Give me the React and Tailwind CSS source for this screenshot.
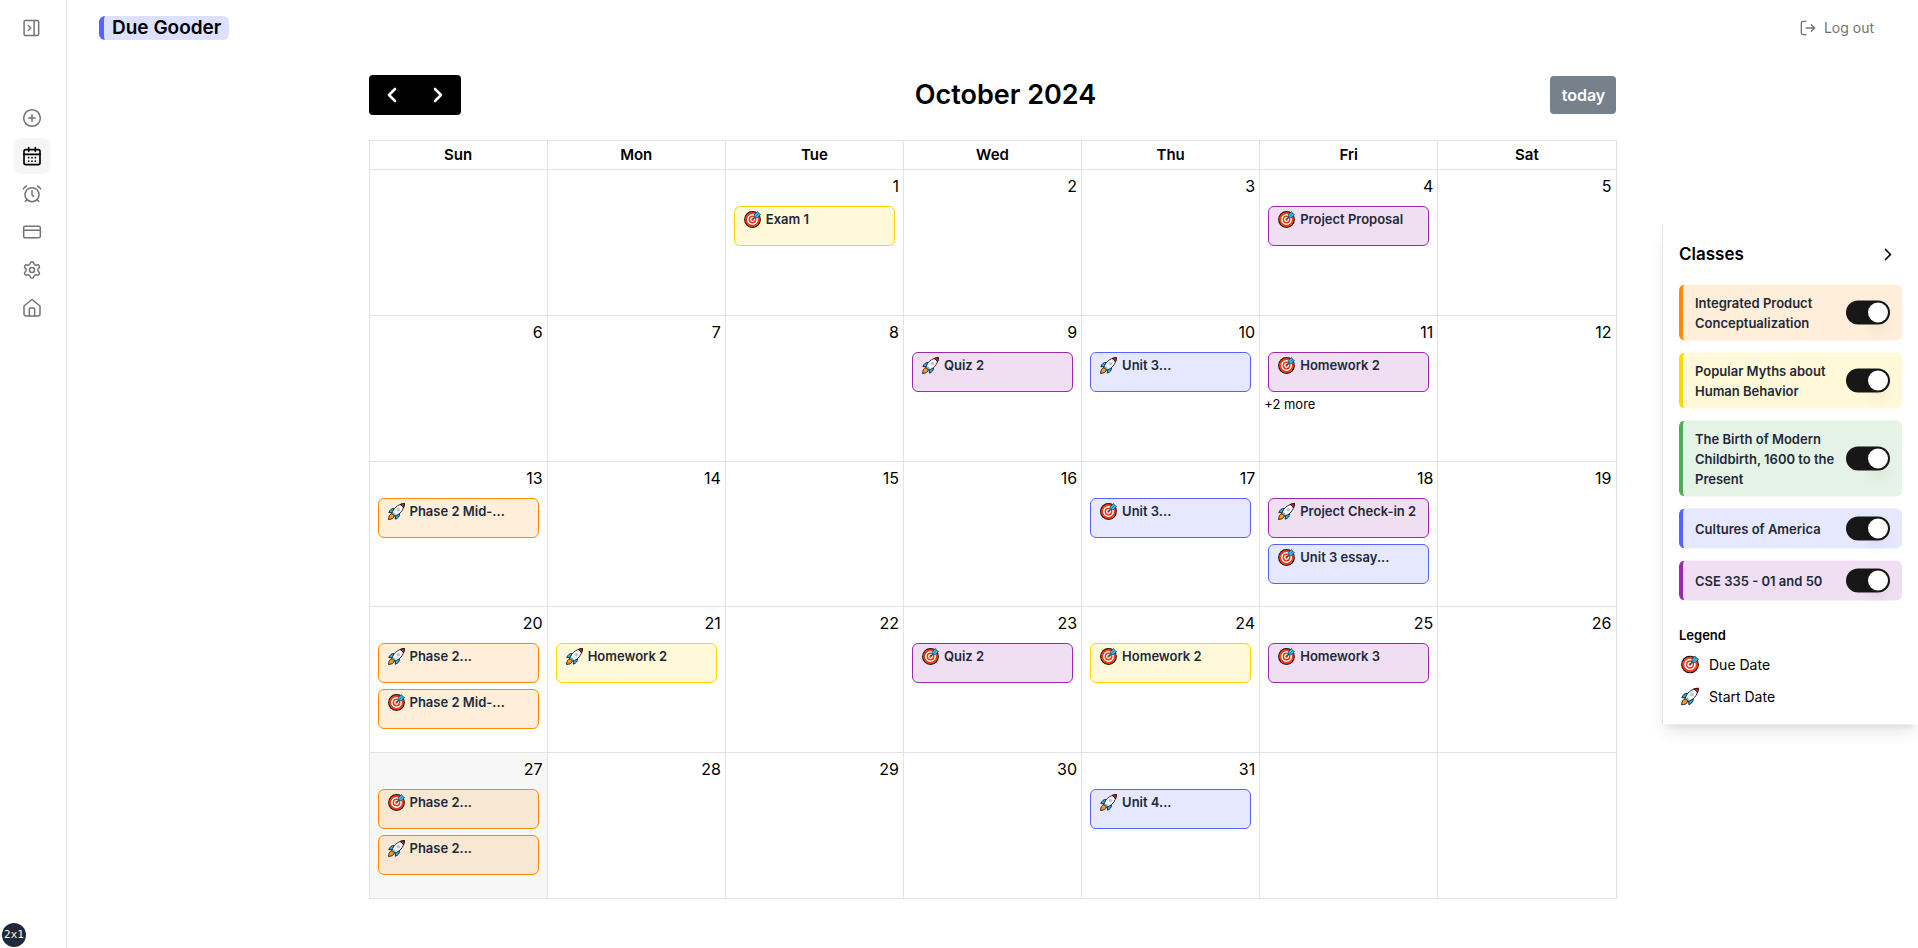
import { useState } from "react";
import { Settings, CirclePlus, CreditCard, ChevronRight } from "lucide-react";

const COLORS = {
  orange: "border-[#ff8c00] bg-[#ff8c00]/15",
  yellow: "border-[#ffd700] bg-[#ffd700]/15",
  green: "border-[#4caf50] bg-[#4caf50]/15",
  blue: "border-[#5563ff] bg-[#5563ff]/15",
  purple: "border-[#9c27b0] bg-[#9c27b0]/15",
};

const DAYS = ["Sun", "Mon", "Tue", "Wed", "Thu", "Fri", "Sat"];

const EVENTS = {
  1: [["due", "Exam 1", "yellow"]],
  4: [["due", "Project Proposal", "purple"]],
  9: [["start", "Quiz 2", "purple"]],
  10: [["start", "Unit 3...", "blue"]],
  11: [["due", "Homework 2", "purple"]],
  13: [["start", "Phase 2 Mid-...", "orange"]],
  17: [["due", "Unit 3...", "blue"]],
  18: [
    ["start", "Project Check-in 2", "purple"],
    ["due", "Unit 3 essay...", "blue"],
  ],
  20: [
    ["start", "Phase 2...", "orange"],
    ["due", "Phase 2 Mid-...", "orange"],
  ],
  21: [["start", "Homework 2", "yellow"]],
  23: [["due", "Quiz 2", "purple"]],
  24: [["due", "Homework 2", "yellow"]],
  25: [["due", "Homework 3", "purple"]],
  27: [
    ["due", "Phase 2...", "orange"],
    ["start", "Phase 2...", "orange"],
  ],
  31: [["start", "Unit 4...", "blue"]],
};

const MORE = { 11: 2 };
const TODAY = 27;

const WEEKS = [0, 1, 2, 3, 4].map((w) =>
  DAYS.map((_, d) => {
    const n = w * 7 + d - 1;
    return n >= 1 && n <= 31 ? n : null;
  }),
);

const CLASSES = [
  ["Integrated Product Conceptualization", "orange"],
  ["Popular Myths about Human Behavior", "yellow"],
  ["The Birth of Modern Childbirth, 1600 to the Present", "green"],
  ["Cultures of America", "blue"],
  ["CSE 335 - 01 and 50", "purple"],
];

function Target({ className }) {
  return (
    <svg viewBox="0 0 32 32" className={className} aria-hidden="true">
      <circle cx="16" cy="16" r="15.8" fill="#1a0d0a" />
      <circle cx="16" cy="16" r="14" fill="#f03a17" />
      <circle cx="16" cy="16" r="10.2" fill="#fff" />
      <circle cx="16" cy="16" r="7.4" fill="#f03a17" />
      <circle cx="16" cy="16" r="4.6" fill="#fff" />
      <circle cx="16" cy="16" r="2.2" fill="#f03a17" />
      <path d="M16 16 22 10" stroke="#16425c" strokeWidth="2.2" />
      <path d="M19.5 12.5V6.5L25.5 0.8 27.5 4.5 31.2 6.5 25.5 12.5Z" fill="#29b8ef" stroke="#113850" strokeWidth="1.2" strokeLinejoin="round" />
      <path d="M20.5 11.5 27.5 4.5" stroke="#0f81b5" strokeWidth="1.3" />
    </svg>
  );
}

function Rocket({ className }) {
  return (
    <svg viewBox="0 0 32 32" className={className} aria-hidden="true">
      <g stroke="#111" strokeWidth="1.6" strokeLinejoin="round">
        <path d="M8 20C3 21 1.5 25 1 31 7 30.5 11 29 12 24Z" fill="#ff9a1f" />
        <path d="M12.5 10.5C7 9.5 3.5 13 1.5 18L9 18.5Z" fill="#20b4f0" />
        <path d="M21.5 19.5C22.5 25 19 28.5 14 30.5L13.5 23Z" fill="#20b4f0" />
        <path d="M7.5 19.5C9.5 11 17 2.5 31 1 29.5 15 21 22.5 12.5 24.5Z" fill="#f4f5f7" />
        <path d="M22.5 2.9C25 1.7 28 1.2 31 1 30.8 4 30.3 7 29.1 9.5 28 6.5 25.5 4 22.5 2.9Z" fill="#e3212f" />
      </g>
      <circle cx="19.5" cy="12.5" r="2.4" fill="#c7cbd0" stroke="#aaa" />
      <path d="M10 18.5 13.5 22" stroke="#20b4f0" strokeWidth="2.4" />
    </svg>
  );
}

function Marker({ kind, className }) {
  return kind === "due" ? <Target className={className} /> : <Rocket className={className} />;
}

function LineIcon({ children, className = "size-5", strokeWidth = 1.8 }) {
  return (
    <svg
      viewBox="0 0 24 24"
      className={className}
      fill="none"
      stroke="currentColor"
      strokeWidth={strokeWidth}
      strokeLinecap="round"
      strokeLinejoin="round"
      aria-hidden="true"
    >
      {children}
    </svg>
  );
}

const NAV = [
  ["Add", <CirclePlus className="size-5" strokeWidth={1.8} />],
  [
    "Calendar",
    <LineIcon strokeWidth={2}>
      <rect x="2.4" y="4.4" width="19.2" height="18" rx="2.2" />
      <path d="M2.4 10H21.6M8 1.8V6.4M16 1.8V6.4" />
      <path d="M8 14h.01M12 14h.01M16 14h.01M8 18.2h.01M12 18.2h.01M16 18.2h.01" />
    </LineIcon>,
  ],
  [
    "Reminders",
    <LineIcon>
      <circle cx="12" cy="12.8" r="8.4" />
      <path d="M12 8.2v4.6l2 2.2M5.8 19 4 21M18.2 19l1.8 2M1.6 6C2.5 4.4 3.8 3.2 5.4 2.4M22.4 6c-.9-1.6-2.2-2.8-3.8-3.6" />
    </LineIcon>,
  ],
  ["Billing", <CreditCard className="size-5" strokeWidth={1.8} />],
  ["Settings", <Settings className="size-5" strokeWidth={1.8} />],
  [
    "Home",
    <LineIcon>
      <path d="M2.4 9.6 12 1.8l9.6 7.8v9.6a2.4 2.4 0 0 1-2.4 2.4H4.8a2.4 2.4 0 0 1-2.4-2.4Z" />
      <path d="M8.8 21.6v-8c0-1 .6-1.6 1.6-1.6h3.2c1 0 1.6.6 1.6 1.6v8" />
    </LineIcon>,
  ],
];

function Sidebar() {
  return (
    <aside className="relative flex w-[67px] shrink-0 flex-col items-start border-r border-[#e5e5e5] pl-[14px]">
      <button aria-label="Open sidebar" className="mt-[10px] flex size-9 items-center justify-center text-[#737373]">
        <LineIcon className="size-5">
          <rect x="2.5" y="3" width="17.5" height="18" rx="1.6" />
          <path d="M14.5 3v18M7.5 9l3 3-3 3" />
        </LineIcon>
      </button>
      <nav className="mt-[54px] flex flex-col gap-[2px]">
        {NAV.map(([label, icon]) => (
          <a
            key={label}
            href="#"
            aria-label={label}
            className={
              label === "Calendar"
                ? "flex size-9 items-center justify-center rounded-md bg-[#f5f5f5] text-black"
                : "flex size-9 items-center justify-center rounded-md text-[#737373]"
            }
          >
            {icon}
          </a>
        ))}
      </nav>
      <div className="absolute bottom-px left-[2px] flex size-6 items-center justify-center rounded-full bg-gray-800 font-['DejaVu_Sans_Mono',monospace] text-[11px] text-white">
        2x1
      </div>
    </aside>
  );
}

function Event({ kind, title, color }) {
  return (
    <button className={`flex h-10 w-full items-start gap-[5px] rounded-md border pt-[4px] pl-[9px] text-left ${COLORS[color]}`}>
      <Marker kind={kind} className="size-[17px] shrink-0" />
      <span className="truncate text-[13px] leading-4 font-semibold text-gray-800">{title}</span>
    </button>
  );
}

function Calendar() {
  return (
    <section className="mx-auto w-full max-w-[1248px]">
      <div className="mb-[25px] flex items-center justify-between">
        <div className="flex h-10 w-[92px] overflow-hidden rounded bg-black text-white">
          {["Previous", "Next"].map((label) => (
            <button key={label} aria-label={`${label} month`} className="flex flex-1 items-center justify-center">
              <LineIcon className="size-6" strokeWidth={2.6}>
                <path d={label === "Previous" ? "M15 6 9 12l6 6" : "M9 6l6 6-6 6"} />
              </LineIcon>
            </button>
          ))}
        </div>
        <h2 className="text-center text-[27px] leading-8 font-semibold">October 2024</h2>
        <button className="h-[38px] w-[66px] rounded bg-[#77818c] text-base font-semibold text-white">
          today
        </button>
      </div>
      <table className="h-[759px] w-full table-fixed border-collapse">
        <thead>
          <tr>
            {DAYS.map((d) => (
              <th key={d} scope="col" className="h-[29px] border border-[#e3e3e3] p-0 text-[15px] leading-6 font-semibold">
                {d}
              </th>
            ))}
          </tr>
        </thead>
        <tbody>
          {WEEKS.map((week, w) => (
            <tr key={w}>
              {week.map((n, d) => (
                <td
                  key={d}
                  className={`h-[145px] border border-[#e3e3e3] p-0 align-top ${n === TODAY ? "bg-[#f7f7f7]" : ""}`}
                >
                  {n && (
                    <>
                      <div className="px-1 pt-1 text-right text-base leading-6">{n}</div>
                      <div className="mt-2 flex flex-col gap-[6px] px-2">
                        {(EVENTS[n] || []).map(([kind, title, color], i) => (
                          <Event key={i} kind={kind} title={title} color={color} />
                        ))}
                      </div>
                      {MORE[n] && (
                        <button className="mt-[2px] block px-1 text-[13px] leading-5">+{MORE[n]} more</button>
                      )}
                    </>
                  )}
                </td>
              ))}
            </tr>
          ))}
        </tbody>
      </table>
    </section>
  );
}

function ClassCard({ name, color }) {
  const [on, setOn] = useState(true);
  return (
    <label
      className={`flex items-center justify-between rounded-md border-0 border-l-4 py-2 pr-3 pl-3 ${COLORS[color]}`}
    >
      <span className="min-w-0 flex-1 text-[13px] leading-5 font-semibold text-gray-800">{name}</span>
      <input
        type="checkbox"
        role="switch"
        checked={on}
        onChange={() => setOn(!on)}
        className="flex h-6 w-11 shrink-0 cursor-pointer appearance-none items-center rounded-full bg-[#e5e5e5] p-[2px] before:size-5 before:rounded-full before:bg-white before:shadow-lg before:content-[''] checked:justify-end checked:bg-[#171717]"
      />
    </label>
  );
}

function ClassPanel() {
  return (
    <aside className="absolute top-1/2 right-0 w-64 -translate-y-1/2 border-l border-[#e5e5e5] bg-white p-4 shadow-lg">
      <div className="mb-4 flex h-[29px] items-center justify-between">
        <h3 className="text-[17px] font-semibold">Classes</h3>
        <button aria-label="Hide classes" className="mr-1">
          <ChevronRight className="size-5" />
        </button>
      </div>
      <div className="flex flex-col gap-3">
        {CLASSES.map(([name, color]) => (
          <ClassCard key={name} name={name} color={color} />
        ))}
      </div>
      <h4 className="mt-6 mb-2 text-[13px] leading-5 font-semibold">Legend</h4>
      <ul className="flex flex-col gap-2 text-sm leading-6">
        {[
          ["due", "Due Date"],
          ["start", "Start Date"],
        ].map(([kind, text]) => (
          <li key={kind} className="flex h-6 items-center gap-[10px] pl-[2px]">
            <Marker kind={kind} className="size-[18px]" />
            {text}
          </li>
        ))}
      </ul>
    </aside>
  );
}

export default function App() {
  return (
    <div className="relative flex min-h-screen bg-white font-['Inter','Liberation_Sans',sans-serif] text-black">
      <Sidebar />
      <div className="flex min-w-0 flex-1 flex-col">
        <header className="flex h-[75px] items-start justify-between pt-4 pr-11 pl-8">
          <h1 className="rounded-md border-l-[5px] border-[#5563ff] bg-[#5563ff]/20 px-2 text-[19px] leading-6 font-semibold">
            Due Gooder
          </h1>
          <button className="flex h-6 items-center gap-2 text-sm text-[#737373]">
            <LineIcon className="size-4" strokeWidth={2}>
              <path d="M9 2H4.5A2.5 2.5 0 0 0 2 4.5v15A2.5 2.5 0 0 0 4.5 22H9M9 12h13M17 7l5 5-5 5" />
            </LineIcon>
            Log out
          </button>
        </header>
        <main className="flex-1">
          <Calendar />
        </main>
      </div>
      <ClassPanel />
    </div>
  );
}
